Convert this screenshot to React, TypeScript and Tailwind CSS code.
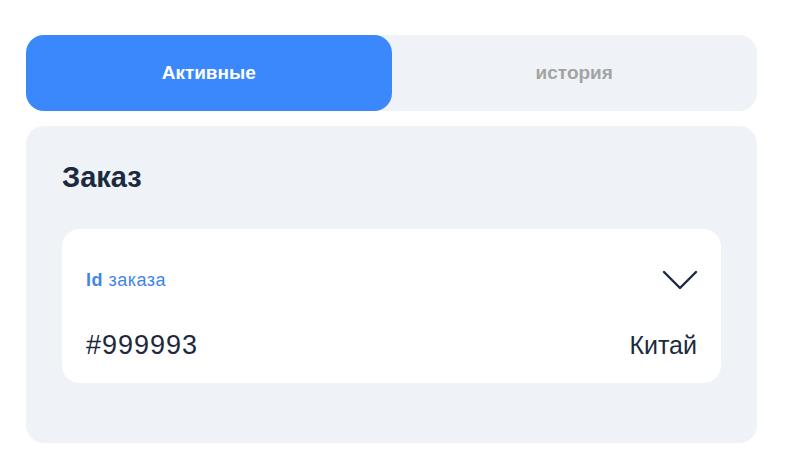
import { useState } from "react";

export default function App() {
  const [tab, setTab] = useState<"active" | "history">("active");

  return (
    <div
      className="min-h-screen bg-white px-[26px] pt-[35px]"
      style={{ fontFamily: '"Liberation Sans", Arial, sans-serif' }}
    >
      <div className="w-[731px]">
        {/* tabs */}
        <div className="flex h-[76px] rounded-[18px] bg-[#eff3f8]">
          <button
            onClick={() => setTab("active")}
            className={`flex-1 rounded-[18px] text-[19px] font-bold ${
              tab === "active" ? "bg-[#3b88fd] text-white" : "text-[#a3a3a3]"
            }`}
          >
            Активные
          </button>
          <button
            onClick={() => setTab("history")}
            className={`flex-1 rounded-[18px] text-[19px] font-bold ${
              tab === "history" ? "bg-[#3b88fd] text-white" : "text-[#a3a3a3]"
            }`}
          >
            история
          </button>
        </div>

        {/* order card */}
        <div className="mt-[15px] rounded-[18px] bg-[#eff3f8] px-[36px] pt-[34px] pb-[60px]">
          <h1 className="text-[29px] font-bold leading-[34px] text-[#1c2a3e]">Заказ</h1>

          <div className="mt-[35px] rounded-[18px] bg-white px-[24px] pt-[40px] pb-[23px]">
            <div className="flex h-[22px] items-center justify-between">
              <span className="text-[18px] tracking-[0.5px] text-[#3f86e8]">
                <span className="font-bold">Id</span> заказа
              </span>
              <svg width="36" height="22" viewBox="0 0 36 22" fill="none" className="mr-[-1px]">
                <path d="M2 3 L18 19 L34 3" stroke="#1c2a3e" strokeWidth="2.4" strokeLinecap="round" strokeLinejoin="round" />
              </svg>
            </div>
            <div className="mt-[39px] flex items-center justify-between leading-[30px] text-[#1c2a3e]">
              <span className="text-[27px] tracking-[1px]">#999993</span>
              <span className="text-[25px]">Китай</span>
            </div>
          </div>
        </div>
      </div>
    </div>
  );
}
